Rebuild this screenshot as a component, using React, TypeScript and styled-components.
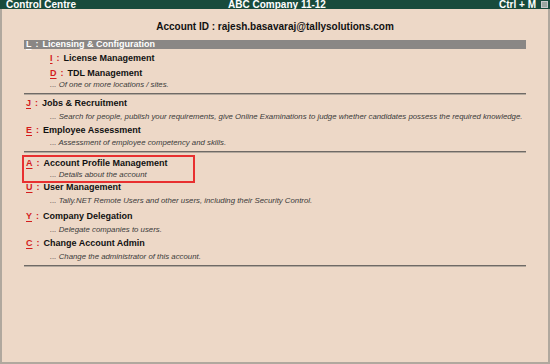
import React from "react";
import styled, { createGlobalStyle } from "styled-components";

const GlobalStyle = createGlobalStyle`
  html, body {
    margin: 0;
    padding: 0;
    background: #edd8c7;
  }
`;

const Window = styled.div`
  width: 550px;
  height: 364px;
  display: flex;
  flex-direction: column;
  background: #edd8c7;
  font-family: "Liberation Sans", Arial, sans-serif;
  overflow: hidden;
`;

const TitleBar = styled.div`
  height: 9px;
  background: #184b3c;
  color: #fff;
  display: grid;
  grid-template-columns: 1fr auto 1fr;
  align-items: start;
  padding: 0 2px 0 6px;
  font-size: 10px;
  font-weight: bold;
  line-height: 10px;
  overflow: hidden;
`;

const TitleRight = styled.div`
  display: flex;
  justify-content: flex-end;
  align-items: center;
  gap: 5px;
  height: 9px;
`;

const CloseBox = styled.span`
  width: 5px;
  height: 5px;
  border: 1px solid #c8c8c8;
  background: #9aa7a0;
`;

const Body = styled.div`
  flex: 1;
  border-left: 2px solid #b0a89e;
  border-right: 2px solid #b0a89e;
  border-bottom: 2px solid #b0a89e;
  padding: 8px 22px 0 22px;
`;

const Heading = styled.div`
  text-align: center;
  font-size: 10px;
  font-weight: bold;
  color: #111;
  height: 19px;
  line-height: 19px;
  margin-bottom: 4px;
`;

const GroupBar = styled.div`
  height: 9px;
  background: #8a8785;
  color: #fff;
  font-size: 9px;
  font-weight: bold;
  line-height: 9px;
  display: flex;
  align-items: center;
  padding-left: 2px;
`;

const Key = styled.span<{ $light?: boolean }>`
  color: ${p => (p.$light ? "#fff" : "#d41c1c")};
  text-decoration: underline;
  text-underline-offset: 2px;
  font-weight: bold;
`;

const Colon = styled.span<{ $light?: boolean }>`
  color: ${p => (p.$light ? "#fff" : "#d41c1c")};
  margin: 0 4px;
  font-weight: bold;
`;

const Item = styled.div<{ $indent: number; $boxed?: boolean }>`
  margin-left: ${p => (p.$boxed ? p.$indent - 4 : p.$indent)}px;
  padding-left: ${p => (p.$boxed ? 2 : 0)}px;
  width: ${p => (p.$boxed ? "167px" : "auto")};
  border: ${p => (p.$boxed ? "2px solid #e83030" : "none")};
  margin-bottom: ${p => (p.$boxed ? "-2px" : "0")};
`;

const ItemTitle = styled.div`
  font-size: 9px;
  font-weight: bold;
  color: #111;
  height: 12px;
  line-height: 12px;
  display: flex;
  align-items: center;
  white-space: nowrap;
`;

const Desc = styled.div<{ $pad: number; $drop: number }>`
  font-size: 7.8px;
  font-style: italic;
  color: #3a3a3a;
  height: 12px;
  line-height: 12px;
  margin-top: ${p => p.$drop}px;
  padding-left: ${p => p.$pad}px;
  white-space: nowrap;
`;

const Rule = styled.div<{ $before: number; $after: number }>`
  height: 1px;
  background: #6f6a66;
  border-bottom: 1px solid #b3a89d;
  margin: ${p => p.$before}px 0 ${p => p.$after}px;
`;

const Spacer = styled.div<{ $h: number }>`
  height: ${p => p.$h}px;
`;

type Entry = {
  k: string;
  title: string;
  desc?: string;
  indent: number;
  descPad?: number;
  drop?: number;
  boxed?: boolean;
};

const MenuItem = ({ e }: { e: Entry }) => (
  <Item $indent={e.indent} $boxed={e.boxed}>
    <ItemTitle>
      <Key>{e.k}</Key>
      <Colon>:</Colon>
      {e.title}
    </ItemTitle>
    {e.desc && (
      <Desc $pad={e.descPad ?? 24} $drop={e.drop ?? 2}>
        {"... " + e.desc}
      </Desc>
    )}
  </Item>
);

export default function App() {
  return (
    <>
      <GlobalStyle />
      <Window>
        <TitleBar>
          <span>Control Centre</span>
          <span>ABC Company 11-12</span>
          <TitleRight>
            <span>Ctrl + M</span>
            <CloseBox />
          </TitleRight>
        </TitleBar>
        <Body>
          <Heading>Account ID : rajesh.basavaraj@tallysolutions.com</Heading>
          <GroupBar>
            <Key $light>L</Key>
            <Colon $light>:</Colon>
            Licensing &amp; Configuration
          </GroupBar>
          <Spacer $h={3} />
          <MenuItem e={{ k: "I", title: "License Management", indent: 26 }} />
          <Spacer $h={3} />
          <MenuItem
            e={{
              k: "D",
              title: "TDL Management",
              indent: 26,
              desc: "Of one or more locations / sites.",
              descPad: 0,
              drop: 0,
            }}
          />
          <Rule $before={2} $after={2} />
          <MenuItem
            e={{
              k: "J",
              title: "Jobs & Recruitment",
              indent: 2,
              desc: "Search for people, publish your requirements, give Online Examinations to judge whether candidates possess the required knowledge.",
            }}
          />
          <Spacer $h={1} />
          <MenuItem
            e={{
              k: "E",
              title: "Employee Assessment",
              indent: 2,
              desc: "Assessment of employee competency and skills.",
              drop: 1,
            }}
          />
          <Rule $before={2} $after={2} />
          <MenuItem
            e={{
              k: "A",
              title: "Account Profile Management",
              indent: 2,
              desc: "Details about the account",
              boxed: true,
              drop: 0,
            }}
          />
          <MenuItem
            e={{
              k: "U",
              title: "User Management",
              indent: 2,
              desc: "Tally.NET Remote Users and other users, including their Security Control.",
            }}
          />
          <Spacer $h={3} />
          <MenuItem e={{ k: "Y", title: "Company Delegation", indent: 2, desc: "Delegate companies to users." }} />
          <Spacer $h={1} />
          <MenuItem
            e={{ k: "C", title: "Change Account Admin", indent: 2, desc: "Change the administrator of this account." }}
          />
          <Rule $before={2} $after={0} />
        </Body>
      </Window>
    </>
  );
}
